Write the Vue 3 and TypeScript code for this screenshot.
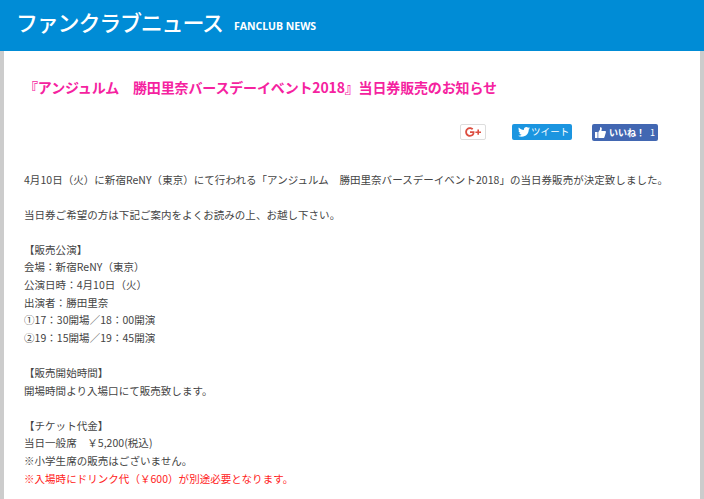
<script setup lang="ts">
interface Line { text: string; red?: boolean }
const blocks: Line[][] = [
  [{ text: '4月10日（火）に新宿ReNY（東京）にて行われる「アンジュルム　勝田里奈バースデーイベント2018」の当日券販売が決定致しました。' }],
  [{ text: '当日券ご希望の方は下記ご案内をよくお読みの上、お越し下さい。' }],
  [
    { text: '【販売公演】' },
    { text: '会場：新宿ReNY（東京）' },
    { text: '公演日時：4月10日（火）' },
    { text: '出演者：勝田里奈' },
    { text: '①17：30開場／18：00開演' },
    { text: '②19：15開場／19：45開演' },
  ],
  [{ text: '【販売開始時間】' }, { text: '開場時間より入場口にて販売致します。' }],
  [
    { text: '【チケット代金】' },
    { text: '当日一般席　￥5,200(税込)' },
    { text: '※小学生席の販売はございません。' },
    { text: '※入場時にドリンク代（￥600）が別途必要となります。', red: true },
  ],
]
</script>

<template>
  <div class="page">
    <header class="head">
      <h1 class="head-title">ファンクラブニュース</h1>
      <span class="head-sub">FANCLUB NEWS</span>
    </header>
    <main class="sheet">
      <h2 class="title">『アンジュルム　勝田里奈バースデーイベント2018』当日券販売のお知らせ</h2>
      <div class="social">
        <a class="btn gplus">
          <svg width="17" height="10" viewBox="0 0 17 10">
            <path d="M5 4.200v1.700h2.700C7.400 7 6.400 7.900 5 7.900 3.300 7.900 2 6.600 2 5s1.300-2.900 3-2.900c.8 0 1.500.3 2 .8l1.300-1.300C7.500.8 6.300.2 5 .2 2.300.2.200 2.300.2 5s2.100 4.800 4.800 4.800c2.800 0 4.500-1.900 4.500-4.700 0-.3 0-.6-.1-.9H5z" fill="#dc4e41"/>
            <path d="M12.400 2.500h1.600v1.900h2v1.500h-2v1.900h-1.600V5.900h-2V4.400h2z" fill="#dc4e41"/>
          </svg>
        </a>
        <a class="btn tweet">
          <svg width="12" height="10" viewBox="0 0 24 20">
            <path d="M24 2.400c-.9.400-1.800.7-2.800.8 1-.6 1.800-1.600 2.200-2.700-1 .6-2 1-3.100 1.200C19.300.7 18 0 16.600 0c-2.700 0-4.900 2.200-4.900 4.900 0 .4 0 .8.100 1.100C7.700 5.800 4.100 3.900 1.700.9c-.4.700-.7 1.600-.7 2.500 0 1.700.9 3.200 2.200 4.100-.8 0-1.600-.2-2.200-.6v.1c0 2.400 1.700 4.400 3.900 4.800-.4.100-.8.200-1.300.2-.3 0-.6 0-.9-.1.600 2 2.400 3.400 4.600 3.400-1.700 1.300-3.800 2.100-6.100 2.100-.4 0-.8 0-1.200-.1C2.200 18.700 4.800 19.500 7.500 19.500c9.100 0 14-7.500 14-14v-.6c1-.7 1.800-1.600 2.500-2.500z" fill="#fff"/>
          </svg>
          <span class="tweet-text">ツイート</span>
        </a>
        <a class="btn like">
          <svg width="11" height="11" viewBox="0 0 11 11">
            <path d="M0 5h2.500v6H0zM3.300 5.200 5 2.500V.5c1-.5 2 .3 1.800 1.500L6.400 4H10c.7 0 1.100.7.900 1.300L9.500 10c-.1.500-.5 1-1.200 1H3.300z" fill="#fff"/>
          </svg>
          <span class="like-text">いいね！</span>
          <span class="like-count">1</span>
        </a>
      </div>
      <div class="body">
        <p v-for="(block, i) in blocks" :key="i" class="para">
          <span v-for="(line, j) in block" :key="j" class="line" :class="{ red: line.red }">{{ line.text }}</span>
        </p>
      </div>
    </main>
  </div>
</template>

<style>
html, body { margin: 0; background: #ccc; overflow: hidden; }
</style>

<style scoped>
.page {
  width: 704px;
  height: 499px;
  overflow: hidden;
  font-family: "Noto Sans CJK JP", "Noto Sans", sans-serif;
  color: #444;
}
.head {
  height: 51px;
  background: #008cd6;
  display: flex;
  align-items: center;
  padding: 0 0 10px 16px;
  box-sizing: border-box;
  color: #fff;
}
.head-title {
  margin: 0;
  font-size: 22px;
  font-weight: 500;
  line-height: 1;
  letter-spacing: -1.200px;
}
.head-sub {
  margin: 10px 0 0 11px;
  font: 700 10.500px "Open Sans", sans-serif;
}
.sheet {
  margin: 0 4px;
  background: #fff;
  padding: 26px 20px 0;
  height: 448px;
  box-sizing: border-box;
}
.title {
  margin: 0;
  font-size: 14px;
  line-height: 20px;
  font-weight: 700;
  letter-spacing: -0.150px;
  color: #f5229f;
  white-space: nowrap;
}
.social {
  height: 18px;
  margin-top: 27px;
  display: flex;
  align-items: flex-start;
  font-size: 9px;
  color: #fff;
}
.btn { display: flex; align-items: center; box-sizing: border-box; height: 16px; border-radius: 2px; }
.gplus { margin-left: 436px; width: 26px; border: 1px solid #ddd; background: #fff; justify-content: center; }
.tweet { margin-left: 26px; width: 60px; background: #1b95e0; padding-left: 6px; gap: 1px; }
.tweet-text { font-size: 9.500px; letter-spacing: 0.100px; margin-top: -2px; }
.like { margin-left: 20px; width: 66px; background: #4267b2; padding-left: 3px; gap: 3px; font-weight: 700; height: 17px; }
.like-count { margin-left: 2px; font-weight: 400; }
.body {
  margin-top: 28.500px;
  font-size: 10.500px;
  letter-spacing: 0.040px;
  line-height: 17.600px;
}
.para { margin: 0 0 17.600px; }
.line { display: block; white-space: nowrap; }
.red { color: #f22; }
</style>
